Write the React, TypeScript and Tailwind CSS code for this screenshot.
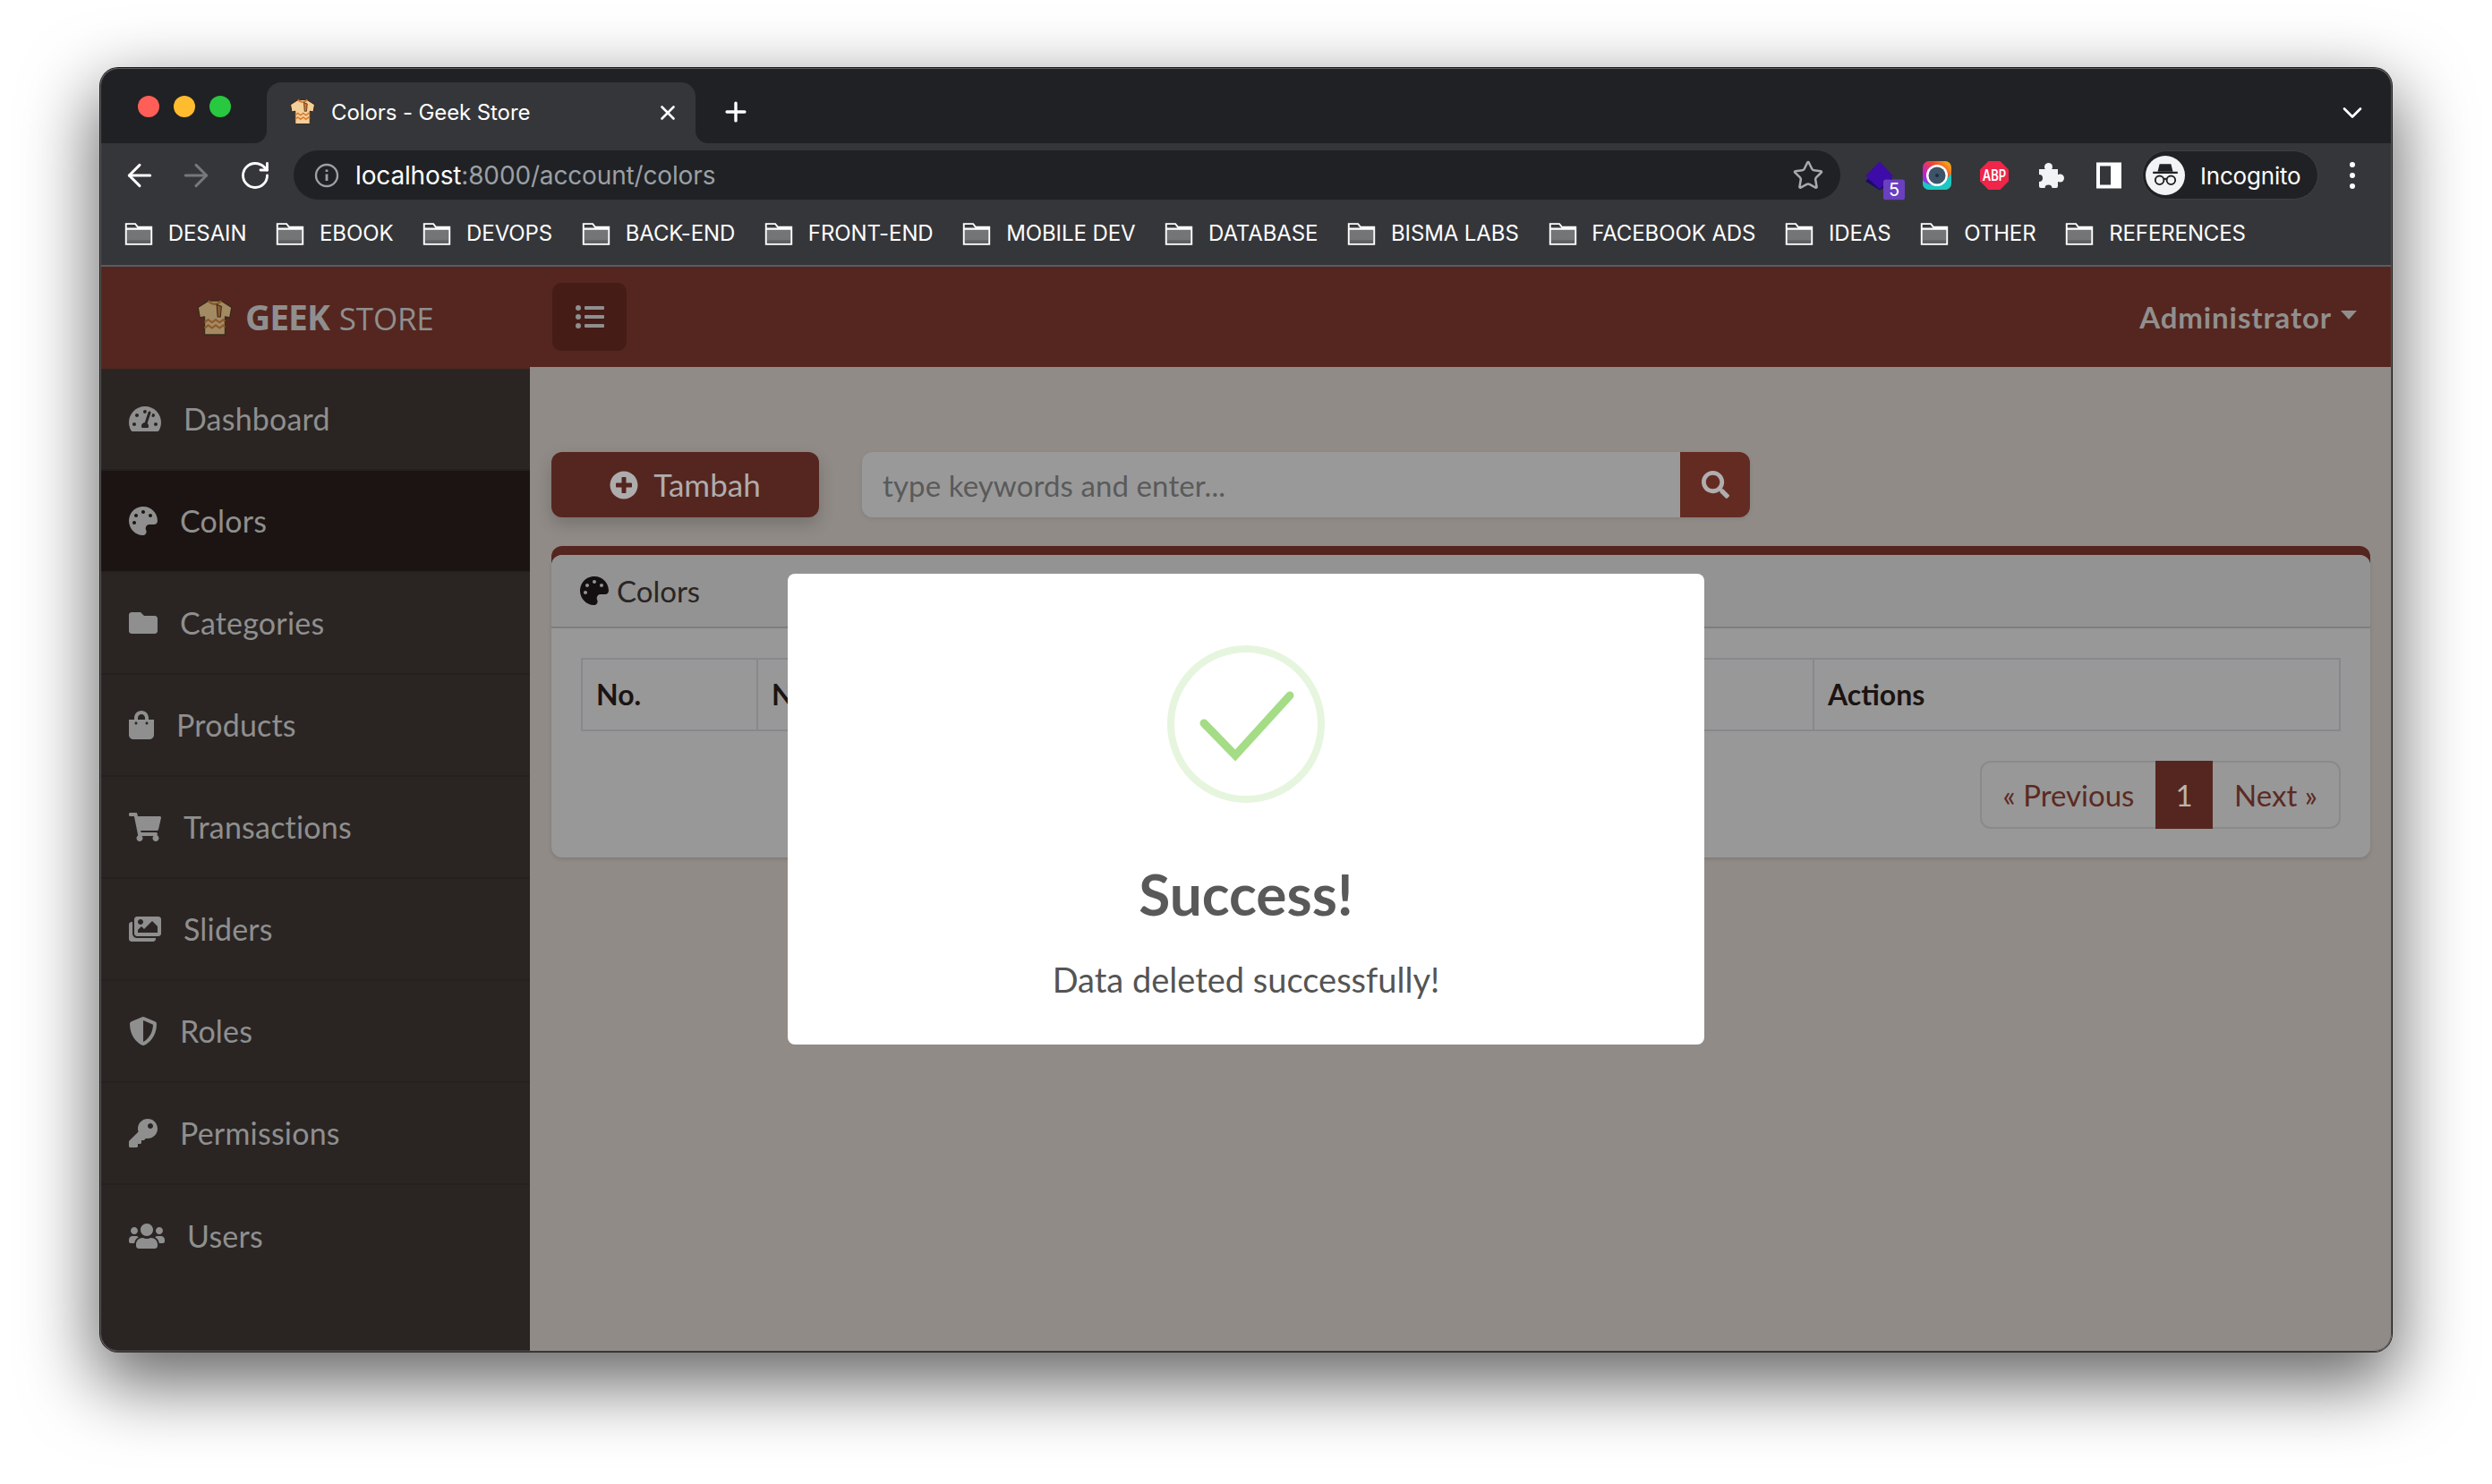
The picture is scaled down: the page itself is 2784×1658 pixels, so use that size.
import type { ReactNode } from "react";
import { ArrowLeft, ArrowRight, ChevronDown, Plus, RotateCw, Star, X } from "lucide-react";
import {
  FaFolder,
  FaImages,
  FaKey,
  FaListUl,
  FaPalette,
  FaPlusCircle,
  FaSearch,
  FaShieldAlt,
  FaShoppingBag,
  FaShoppingCart,
  FaTachometerAlt,
  FaUsers,
} from "react-icons/fa";

const BOOKMARKS = [
  "DESAIN",
  "EBOOK",
  "DEVOPS",
  "BACK-END",
  "FRONT-END",
  "MOBILE DEV",
  "DATABASE",
  "BISMA LABS",
  "FACEBOOK ADS",
  "IDEAS",
  "OTHER",
  "REFERENCES",
];

// icon boxes follow each glyph's own width, the label starts right after it
const NAV_ITEMS = [
  { label: "Dashboard", icon: FaTachometerAlt, iconClass: "w-[36px] h-[32px]" },
  { label: "Colors", icon: FaPalette, iconClass: "w-[32px] h-[32px]", active: true },
  { label: "Categories", icon: FaFolder, iconClass: "w-[32px] h-[32px]" },
  { label: "Products", icon: FaShoppingBag, iconClass: "w-[28px] h-[32px]" },
  { label: "Transactions", icon: FaShoppingCart, iconClass: "w-[36px] h-[32px]" },
  { label: "Sliders", icon: FaImages, iconClass: "w-[36px] h-[32px]" },
  { label: "Roles", icon: FaShieldAlt, iconClass: "w-[32px] h-[32px]" },
  { label: "Permissions", icon: FaKey, iconClass: "w-[32px] h-[32px]" },
  { label: "Users", icon: FaUsers, iconClass: "w-[40px] h-[32px]" },
];

const QUICK = "font-['Lato','Noto_Sans',sans-serif]";

function ShirtIcon({ body, band, className }: { body: string; band: string; className: string }) {
  return (
    <svg viewBox="0 0 40 40" className={className}>
      <path
        d="M13 2 L27 2 L38 9 L36 20 L31 19 L31 38 L9 38 L9 19 L4 20 L2 9 Z"
        fill={body}
        stroke="#3a2a1c"
        strokeWidth="1.4"
        strokeLinejoin="round"
      />
      <path d="M13 2 Q20 9 27 2" fill="none" stroke={band} strokeWidth="2.4" />
      <path d="M9 25 l4 -3 l4 3 l4 -3 l4 3 l4 -3 l2 2 M9 31 l4 -3 l4 3 l4 -3 l4 3 l4 -3 l2 2" fill="none" stroke={band} strokeWidth="2" />
      <path d="M22 6 L27 8 L26 19 L23 19 Z" fill={band} stroke="#3a2a1c" strokeWidth="1" />
    </svg>
  );
}

function BookmarkFolder() {
  return (
    <svg viewBox="0 0 32 26" className="w-[32px] h-[25px] shrink-0">
      <path d="M2 5 H30 V24 H2 Z" fill="#747577" />
      <path d="M2 20 H30 V24 H2 Z" fill="#5f6062" />
      <path d="M1.2 24.8 V1.2 H12 L15 5 H30.8 V24.8 Z M1.2 7 H30.8" fill="none" stroke="#ffffff" strokeWidth="2" />
    </svg>
  );
}

function ToolbarSlot({ left, children }: { left: number; children: ReactNode }) {
  return (
    <span className="absolute top-1/2 -translate-x-1/2 -translate-y-1/2 flex" style={{ left }}>
      {children}
    </span>
  );
}

function TabStrip() {
  return (
    <div className="h-[84px] bg-[#202124] flex items-end shrink-0 relative">
      <div className="flex gap-[16px] absolute left-[42px] top-[31px]">
        <span className="w-[24px] h-[24px] rounded-full bg-[#ff5f57]" />
        <span className="w-[24px] h-[24px] rounded-full bg-[#febc2e]" />
        <span className="w-[24px] h-[24px] rounded-full bg-[#28c840]" />
      </div>
      <div className="relative ml-[186px] w-[479px] h-[68px] bg-[#35363a] rounded-t-[16px] flex items-center pl-[25px] pr-[18px] text-white">
        <span className="absolute -left-[14px] bottom-0 w-[14px] h-[14px] bg-[#35363a]">
          <span className="block w-full h-full bg-[#202124] rounded-br-[14px]" />
        </span>
        <span className="absolute -right-[14px] bottom-0 w-[14px] h-[14px] bg-[#35363a]">
          <span className="block w-full h-full bg-[#202124] rounded-bl-[14px]" />
        </span>
        <ShirtIcon body="#f3cf9a" band="#d9772b" className="w-[30px] h-[30px] mb-[2px]" />
        <span className="ml-[17px] text-[24px] leading-none font-['Inter',sans-serif] tracking-[-0.1px]">Colors - Geek Store</span>
        <X size={26} strokeWidth={2.4} className="ml-auto" />
      </div>
      <Plus size={34} strokeWidth={2.4} className="text-white ml-[28px] mb-[18px]" />
      <ChevronDown size={36} strokeWidth={1.8} className="text-white absolute right-[26px] top-[32px]" />
    </div>
  );
}

function Toolbar() {
  return (
    <div className="h-[72px] bg-[#35363a] relative shrink-0">
      <ToolbarSlot left={44}>
        <ArrowLeft size={40} strokeWidth={1.8} className="text-white" />
      </ToolbarSlot>
      <ToolbarSlot left={107}>
        <ArrowRight size={40} strokeWidth={1.8} className="text-[#77787b]" />
      </ToolbarSlot>
      <ToolbarSlot left={173}>
        <RotateCw size={36} strokeWidth={1.9} className="text-white" />
      </ToolbarSlot>
      <div className="absolute left-[216px] top-[8px] w-[1728px] h-[55px] rounded-full bg-[#202124] flex items-center pl-[23px] pr-[18px]">
        <svg viewBox="0 0 28 28" className="w-[28px] h-[28px] shrink-0">
          <circle cx="14" cy="14" r="12" fill="none" stroke="#9aa0a6" strokeWidth="2.4" />
          <path d="M14 12.5 V20 M14 7.5 V10" stroke="#9aa0a6" strokeWidth="2.8" />
        </svg>
        <span className="ml-[18px] text-[28px] leading-none font-['Inter',sans-serif] tracking-[-0.15px]">
          <span className="text-white">localhost</span>
          <span className="text-[#9aa0a6]">:8000/account/colors</span>
        </span>
        <Star size={36} strokeWidth={1.7} className="text-[#a7a9ac] ml-auto" />
      </div>
      <ToolbarSlot left={1994}>
        <svg viewBox="0 0 44 43" className="w-[44px] h-[43px] mt-[12px]">
          <path d="M0 22 L16 6 L32 22 L16 32 Z" fill="#1c0a66" />
          <path d="M0 16 L16 0 L31 16 L16 31 Z" fill="#3d0ba8" />
          <rect x="20" y="20" width="24" height="23" rx="3" fill="#6a3fc0" />
          <text x="32" y="38.5" textAnchor="middle" fontSize="20" fill="#ffffff" fontFamily="Inter, sans-serif">5</text>
        </svg>
      </ToolbarSlot>
      <ToolbarSlot left={2052}>
        <svg viewBox="0 0 32 32" className="w-[32px] h-[32px]">
          <defs>
            <linearGradient id="camGrad" x1="0" y1="1" x2="1" y2="0">
              <stop offset="0" stopColor="#2f6df6" />
              <stop offset="0.3" stopColor="#c01fd6" />
              <stop offset="0.65" stopColor="#f0492b" />
              <stop offset="1" stopColor="#f5c518" />
            </linearGradient>
          </defs>
          <rect width="32" height="32" rx="7" fill="url(#camGrad)" />
          <path d="M0 22 Q16 34 32 14 V25 a7 7 0 0 1 -7 7 H7 a7 7 0 0 1 -7 -7 Z" fill="#19c8c0" />
          <circle cx="16" cy="16" r="12" fill="#ffffff" />
          <circle cx="16" cy="16" r="9.5" fill="#3d5468" />
          <circle cx="16" cy="16" r="2" fill="#1e2c3a" />
        </svg>
      </ToolbarSlot>
      <ToolbarSlot left={2116}>
        <svg viewBox="0 0 32 32" className="w-[32px] h-[32px]">
          <path d="M9.5 0 H22.5 L32 9.5 V22.5 L22.5 32 H9.5 L0 22.5 V9.5 Z" fill="#ef2549" />
          <text x="16" y="16.6" transform="scale(1 1.3)" textAnchor="middle" fontSize="13" fontWeight="600" fill="#ffffff" fontFamily="Inter, sans-serif">ABP</text>
        </svg>
      </ToolbarSlot>
      <ToolbarSlot left={2180}>
        <svg viewBox="0 0 30 30" className="w-[30px] h-[30px]">
          <path d="M1 8 H22 V27 a2 2 0 0 1 -2 2 H3 a2 2 0 0 1 -2 -2 Z" fill="#f1f3f4" />
          <circle cx="11.5" cy="5.5" r="4.5" fill="#f1f3f4" />
          <circle cx="24.5" cy="18" r="4.5" fill="#f1f3f4" />
          <circle cx="1" cy="18" r="4" fill="#35363a" />
          <circle cx="11.5" cy="29.5" r="4" fill="#35363a" />
        </svg>
      </ToolbarSlot>
      <ToolbarSlot left={2244}>
        <span className="w-[28px] h-[29px] border-[4px] border-r-[12px] border-white block" />
      </ToolbarSlot>
      <div className="absolute left-[2281px] top-[8px] w-[197px] h-[55px] rounded-full bg-[#202124] flex items-center pl-[3px] border border-[#3f4044]">
        <span className="w-[44px] h-[44px] rounded-full bg-[#f1f3f4] flex items-center justify-center shrink-0">
          <svg viewBox="0 0 32 32" className="w-[34px] h-[34px]">
            <path d="M10 4 H22 L24 12 H8 Z" fill="#202124" />
            <path d="M3 13 H29" stroke="#202124" strokeWidth="2" />
            <circle cx="10" cy="21" r="4.5" fill="none" stroke="#202124" strokeWidth="1.8" />
            <circle cx="22" cy="21" r="4.5" fill="none" stroke="#202124" strokeWidth="1.8" />
            <path d="M14.5 20 Q16 19 17.5 20" fill="none" stroke="#202124" strokeWidth="1.8" />
          </svg>
        </span>
        <span className="ml-[17px] mt-[2px] text-[26px] leading-none text-white font-['Inter',sans-serif] tracking-[-0.2px]">Incognito</span>
      </div>
      <ToolbarSlot left={2516}>
        <span className="flex flex-col gap-[6px]">
          <span className="w-[6px] h-[6px] rounded-full bg-white" />
          <span className="w-[6px] h-[6px] rounded-full bg-white" />
          <span className="w-[6px] h-[6px] rounded-full bg-white" />
        </span>
      </ToolbarSlot>
    </div>
  );
}

function BookmarkBar() {
  return (
    <div className="h-[66px] bg-[#35363a] border-b-2 border-[#5b5c5f] flex items-center pl-[27px] gap-[32.8px] shrink-0 pb-[6px]">
      {BOOKMARKS.map((name) => (
        <span key={name} className="flex items-center gap-[16.8px]">
          <BookmarkFolder />
          <span className="text-[24px] leading-none text-white font-['Inter',sans-serif] tracking-[-0.1px]">{name}</span>
        </span>
      ))}
    </div>
  );
}

function AppHeader() {
  return (
    <div className="h-[112px] bg-[#55261f] flex items-center shrink-0">
      <ShirtIcon body="#a48a63" band="#8a5a2c" className="w-[42px] h-[42px] ml-[107px] mt-[2px]" />
      <span className="ml-[13px] mb-[2px] flex items-baseline text-[#8f8f8f] font-['Open_Sans',sans-serif] leading-none">
        <span className="font-bold text-[39px] tracking-[-1px]">GEEK</span>
        <span className="ml-[11px] font-normal text-[35px] tracking-[-0.2px]">STORE</span>
      </span>
      <button type="button" className="absolute left-[505px] w-[83px] h-[76px] rounded-[10px] bg-[#451c16] flex items-center justify-center text-[#8f8f8f]">
        <FaListUl size={32} />
      </button>
      <span className={`ml-auto mr-[39px] flex items-center text-[33px] leading-none font-bold text-[#918f8e] tracking-[0.9px] ${QUICK}`}>
        Administrator
        <span className="ml-[10px] w-0 h-0 border-x-[9px] border-x-transparent border-t-[10px] border-t-[#918f8e] mb-[4px]" />
      </span>
    </div>
  );
}

function Sidebar() {
  return (
    <nav className="w-[480px] bg-[#2a2523] shrink-0 border-t-2 border-[#55261f]">
      {NAV_ITEMS.map(({ label, icon: Icon, iconClass, active }) => (
        <div
          key={label}
          className={`h-[114px] flex items-center pl-[32px] gap-[25px] border-b-2 border-[#252120] last:border-b-0 ${active ? "bg-[#1c1412]" : ""}`}
        >
          <Icon className={`text-[#8f8f8f] shrink-0 ${iconClass}`} />
          <span className={`text-[34px] leading-none text-[#8f8f8f] tracking-[0.2px] ${QUICK}`}>{label}</span>
        </div>
      ))}
    </nav>
  );
}

function ColorsCard() {
  return (
    <div className="mt-[32px]">
      <div className="h-[22px] rounded-t-[12px] bg-[#55261f]" />
      <div className="-mt-[12px] rounded-[12px] bg-[#989898] shadow-[0_2px_4px_rgba(0,0,0,0.12)]">
        <div className="h-[82px] bg-[#939393] rounded-t-[12px] border-b-2 border-[#7e7e7e] flex items-center pl-[32px] gap-[9px]">
          <FaPalette size={32} className="text-[#151010]" />
          <span className={`text-[33px] leading-none text-[#2a2523] ${QUICK}`}>Colors</span>
        </div>
        <div className="p-[33px] pb-[32px]">
          <div className="h-[82px] border-2 border-[#85898c] flex items-center text-[32px] font-bold text-[#1c1412]">
            <span className={`w-[196px] h-full border-r-2 border-[#85898c] flex items-center pl-[15px] ${QUICK}`}>No.</span>
            <span className={`w-[1180px] h-full border-r-2 border-[#85898c] flex items-center pl-[15px] ${QUICK}`}>Name</span>
            <span className={`flex-1 pl-[15px] ${QUICK}`}>Actions</span>
          </div>
          <div className="mt-[33px] flex justify-end">
            <div className={`h-[76px] flex text-[33px] leading-none text-[#5c2a22] border-2 border-[#8a8a8a] rounded-[12px] ${QUICK}`}>
              <span className="w-[194px] flex items-center justify-center">« Previous</span>
              <span className="w-[64px] -my-[2px] bg-[#55261f] text-[#b9b3b1] flex items-center justify-center">1</span>
              <span className="w-[141px] flex items-center justify-center">Next »</span>
            </div>
          </div>
        </div>
      </div>
    </div>
  );
}

function MainContent() {
  return (
    <main className="flex-1 bg-[#908b87] pt-[95px] px-[24px]">
      <div className="h-[73px] flex">
        <button
          type="button"
          className={`w-[299px] rounded-[12px] bg-[#55261f] flex items-center justify-center gap-[17px] text-[#adadad] text-[35px] leading-none shadow-[0_8px_18px_rgba(0,0,0,0.18)] ${QUICK}`}
        >
          <FaPlusCircle size={32} />
          Tambah
        </button>
        <div className="ml-[48px] flex shadow-[0_2px_4px_rgba(0,0,0,0.08)] rounded-[12px]">
          <input
            readOnly
            placeholder="type keywords and enter..."
            className={`w-[914px] h-full rounded-l-[12px] bg-[#999999] pl-[23px] text-[33px] tracking-[0.1px] placeholder:text-[#5a5a5a] outline-none ${QUICK}`}
          />
          <span className="w-[78px] rounded-r-[12px] bg-[#642b22] flex items-center justify-center text-[#b0aeae]">
            <FaSearch size={31} />
          </span>
        </div>
      </div>
      <ColorsCard />
    </main>
  );
}

function SuccessModal() {
  return (
    <div className="absolute inset-0 flex items-center justify-center">
      <div className="w-[1024px] h-[526px] bg-white rounded-[8px] flex flex-col items-center pt-[80px]">
        <svg viewBox="0 0 176 176" className="w-[176px] h-[176px]">
          <circle cx="88" cy="88" r="84" fill="none" stroke="#e6f5dd" strokeWidth="8" />
          <path d="M41 87 L76 123 L137 56" fill="none" stroke="#a5dc86" strokeWidth="9" strokeLinecap="round" strokeLinejoin="miter" />
        </svg>
        <h2 className={`mt-[70px] text-[64px] leading-none font-bold text-[#595959] ${QUICK}`}>Success!</h2>
        <p className={`mt-[44px] text-[38px] leading-none text-[#545454] ${QUICK}`}>Data deleted successfully!</p>
      </div>
    </div>
  );
}

export default function App() {
  return (
    <div className="w-[2784px] h-[1658px] bg-white pt-[76px] pl-[112px] overflow-hidden">
      <div className="relative w-[2560px] h-[1434px] rounded-[20px] shadow-[0_0_0_1px_#161616,0_30px_80px_6px_rgba(0,0,0,0.6)]">
        <div className="w-full h-full rounded-[20px] overflow-hidden flex flex-col">
          <TabStrip />
          <Toolbar />
          <BookmarkBar />
          <div className="flex-1 flex flex-col relative min-h-0">
            <AppHeader />
            <div className="flex-1 flex min-h-0">
              <Sidebar />
              <MainContent />
            </div>
            <SuccessModal />
          </div>
        </div>
        <div className="absolute inset-0 rounded-[20px] shadow-[inset_0_0_0_1px_#5c5c5c] pointer-events-none" />
      </div>
    </div>
  );
}
